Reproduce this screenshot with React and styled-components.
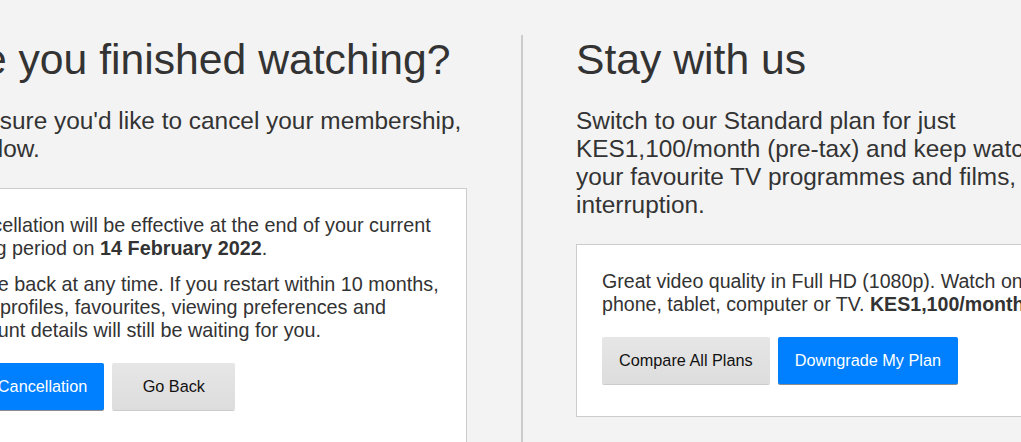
import React from 'react';
import styled, { createGlobalStyle } from 'styled-components';

const GlobalStyle = createGlobalStyle`
  html, body {
    margin: 0;
    padding: 0;
    background: #f3f3f3;
    overflow: hidden;
  }
  body {
    font-family: "Liberation Sans", Arial, Helvetica, sans-serif;
    color: #333;
  }
`;

// the screenshot is a crop of a wider page, so the page starts left of the window
const Page = styled.div`
  display: flex;
  align-items: stretch;
  width: 1230px;
  margin-left: -93px;
  padding-top: 35px;
`;

const Column = styled.section`
  width: ${({ $side }) => ($side === 'left' ? '560px' : '540px')};
  flex: none;
  padding: ${({ $side }) => ($side === 'left' ? '0 54px 0 0' : '0 0 0 53px')};
`;

const Divider = styled.div`
  width: 2px;
  flex: none;
  background: #cccccc;
`;

const Heading = styled.h1`
  margin: 0 0 23px;
  font-size: 42.7px;
  font-weight: 400;
  line-height: normal;
  white-space: nowrap;
`;

const Lead = styled.p`
  margin: 0 0 25px;
  font-size: 24.4px;
  line-height: normal;
`;

const Card = styled.div`
  background: #fff;
  border: 1px solid #cccccc;
  padding: 25px 22px ${({ $bottom }) => $bottom}px 25px;
  font-size: 19.8px;
  line-height: 23px;
`;

const BulletList = styled.ul`
  margin: 0 0 21px;
  padding-left: 23px;
  list-style: disc;
`;

const Bullet = styled.li`
  margin-bottom: 13px;

  &:last-child {
    margin-bottom: 0;
  }
`;

const CardText = styled.p`
  margin: 0 0 21px;
  font-size: 19.6px;
`;

const Actions = styled.div`
  display: flex;
  gap: 8px;
`;

const Button = styled.button`
  min-width: 123px;
  padding: 14px 17px;
  border: none;
  border-radius: 2px;
  font-family: "Liberation Sans", Arial, sans-serif;
  font-size: 16.25px;
  line-height: normal;
  white-space: nowrap;
  cursor: pointer;
  color: ${({ $primary }) => ($primary ? '#fff' : '#111')};
  background: ${({ $primary }) =>
    $primary ? '#0080ff' : 'linear-gradient(180deg, #e6e6e6, #dddddd)'};
  box-shadow: ${({ $primary }) =>
    $primary ? '0 1px 0 rgba(0, 0, 0, 0.45)' : '0 1px 0 rgba(0, 0, 0, 0.2)'};
`;

const App = () => {
  return (
    <>
      <GlobalStyle />
      <Page>
        <Column $side="left">
          <Heading>Have you finished watching?</Heading>
          <Lead>If you're sure you'd like to cancel your membership, finish below.</Lead>
          <Card $bottom={40}>
            <BulletList>
              <Bullet>
                Cancellation will be effective at the end of your current billing period on{' '}
                <strong>14 February 2022</strong>.
              </Bullet>
              <Bullet>
                Come back at any time. If you restart within 10 months, your profiles,
                favourites, viewing preferences and account details will still be waiting for
                you.
              </Bullet>
            </BulletList>
            <Actions>
              <Button $primary>Finish Cancellation</Button>
              <Button>Go Back</Button>
            </Actions>
          </Card>
        </Column>

        <Divider />

        <Column $side="right">
          <Heading>Stay with us</Heading>
          <Lead>
            Switch to our Standard plan for just KES1,100/month (pre-tax) and keep watching
            your favourite TV programmes and films, without interruption.
          </Lead>
          <Card $bottom={32}>
            <CardText>
              Great video quality in Full HD (1080p). Watch on any phone, tablet, computer or
              TV. <strong>KES1,100/month</strong>.
            </CardText>
            <Actions>
              <Button>Compare All Plans</Button>
              <Button $primary>Downgrade My Plan</Button>
            </Actions>
          </Card>
        </Column>
      </Page>
    </>
  );
};

export default App;
